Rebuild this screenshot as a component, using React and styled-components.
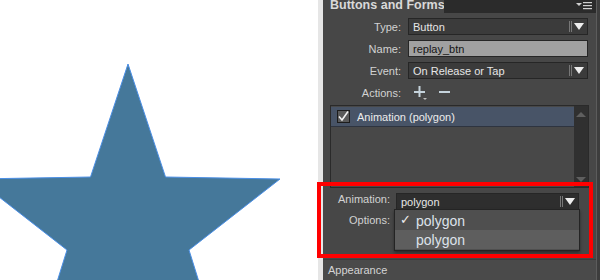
import React from 'react'
import styled, { createGlobalStyle } from 'styled-components'

const Global = createGlobalStyle`
    html, body {
        margin: 0;
        padding: 0;
        background: #fff;
        overflow: hidden;
    }
    body {
        font-family: "Liberation Sans", Arial, sans-serif;
    }
`

const Screen = styled.div`
    position: relative;
    display: flex;
    width: 600px;
    height: 280px;
    overflow: hidden;
`

const Canvas = styled.div`
    flex: 0 0 323px;
    height: 280px;
    background: #fff;
    border-right: 5px solid #e6e6e6;
    box-sizing: border-box;
`

const Panel = styled.div`
    flex: 0 0 273px;
    display: flex;
    flex-direction: column;
    background: #474747;
    border-right: 1px solid #5c5c5c;
`

const Gutter = styled.div`
    flex: 1 1 auto;
    background: #3d3d3d;
`

const Header = styled.div`
    flex: 0 0 13px;
    display: flex;
    background: #2b2b2b;
`

const Tab = styled.div`
    width: 117px;
    background: #474747;
    color: #d9d9d9;
    font-size: 12.5px;
    font-weight: 700;
    line-height: 13px;
    padding-left: 4px;
    margin-top: -3px;
    display: flex;
    align-items: center;
    gap: 3px;
    white-space: nowrap;
    overflow: hidden;
`

const HeaderFill = styled.div`
    flex: 1;
    display: flex;
    justify-content: flex-end;
    padding-right: 2px;
`

const Form = styled.div`
    display: grid;
    grid-template-columns: 78px 1fr;
    column-gap: 7px;
    row-gap: 5px;
    padding: 5px 8px 0 0;
    align-items: center;
`

const Label = styled.div`
    text-align: right;
    color: #d2d2d2;
    font-size: 11px;
`

const Select = styled.div`
    height: 17px;
    box-sizing: border-box;
    border: 1px solid #262626;
    background: ${p => (p.$dark ? '#2e2e2e' : '#3b3b3b')};
    color: #e6e6e6;
    font-size: 11px;
    display: flex;
    align-items: center;
    padding-left: 4px;
    gap: 4px;
`

const SelectText = styled.span`
    flex: 1;
    white-space: nowrap;
`

const Arrow = styled.span`
    display: flex;
    align-items: center;
    gap: 2px;
    padding-right: 3px;
    &::before {
        content: '';
        width: 3px;
        height: 11px;
        border-left: 1px solid #777;
        border-right: 1px solid #777;
        box-sizing: border-box;
    }
    &::after {
        content: '';
        border-left: 5px solid transparent;
        border-right: 5px solid transparent;
        border-top: 7px solid #eee;
    }
`

const Input = styled.div`
    height: 17px;
    box-sizing: border-box;
    border: 1px solid #262626;
    background: #a1a1a1;
    color: #151515;
    font-size: 11px;
    display: flex;
    align-items: center;
    padding-left: 4px;
`

const Actions = styled.div`
    height: 17px;
    display: flex;
    align-items: center;
    gap: 11px;
    padding-left: 6px;
`

const ListBox = styled.div`
    margin: 4px 7px 0 7px;
    height: 81px;
    border: 1px solid #2a2a2a;
    background: #484848;
    display: flex;
`

const ListRows = styled.div`
    flex: 1;
`

const ListRow = styled.div`
    height: 19px;
    margin-top: 1px;
    background: #485467;
    border-bottom: 1px solid #2e3440;
    display: flex;
    align-items: center;
    gap: 7px;
    padding-left: 6px;
    color: #ececec;
    font-size: 11px;
`

const Check = styled.div`
    width: 13px;
    height: 13px;
    box-sizing: border-box;
    border: 1px solid #1c1c1c;
    background: #5a5a5a;
    display: flex;
    align-items: center;
    justify-content: center;
`

const Scrollbar = styled.div`
    flex: 0 0 14px;
    background: #303030;
    display: flex;
    flex-direction: column;
    justify-content: space-between;
    align-items: center;
    padding: 6px 0 5px;
`

const ScrollArrow = styled.div`
    width: 0;
    height: 0;
    border-left: 5px solid transparent;
    border-right: 5px solid transparent;
    ${p => (p.$down ? 'border-top: 5px solid #5f5f5f;' : 'border-bottom: 5px solid #5f5f5f;')}
`

const Section = styled.div`
    position: relative;
    height: 66px;
    display: grid;
    grid-template-columns: 67px 183px;
    column-gap: 6px;
    row-gap: 4px;
    align-content: start;
    padding-top: 5px;
    box-sizing: border-box;
    height: 71px;
`

const Menu = styled.div`
    position: absolute;
    left: 71px;
    top: 21px;
    width: 186px;
    box-sizing: border-box;
    border: 1px solid #242424;
    background: #4f4f4f;
    box-shadow: 0 2px 3px rgba(0, 0, 0, 0.4);
    padding: 1px 0;
`

const MenuItem = styled.div`
    height: 19px;
    display: flex;
    align-items: center;
    background: ${p => (p.$hover ? '#5e5e5e' : 'transparent')};
    color: #dde2ea;
    font-size: 14px;
    padding-left: 21px;
    position: relative;
`

const Tick = styled.span`
    position: absolute;
    left: 5px;
    top: 1px;
    font-size: 13px;
    color: #eee;
`

const OptionsField = styled.div`
    height: 15px;
    margin-top: 16px;
    border-bottom: 1px dashed #6a6a6a;
    width: 100px;
`

const Appearance = styled.div`
    flex: 1;
    border-top: 1px solid #3c3c3c;
    background: #4a4a4a;
    color: #d4d4d4;
    font-size: 11px;
    padding: 4px 0 0 5px;
`

const Highlight = styled.div`
    position: absolute;
    left: 317px;
    top: 182px;
    width: 276px;
    height: 76px;
    box-sizing: border-box;
    border: 4px solid #ff0000;
    pointer-events: none;
`

const Star = () => (
    <svg width="318" height="280" viewBox="0 0 318 280">
        <polygon
            points="128,64 165.5,177 280,179 189,250 224,362 128,292 32,362 67,250 -24,179 90.5,177"
            fill="#45789a"
            stroke="#4b8fe6"
            strokeWidth="1"
        />
    </svg>
)

const PanelMenu = () => (
    <svg width="20" height="11" viewBox="0 0 20 11">
        <path d="M2 3 L8 3 L5 6 Z" fill="#cfcfcf" />
        <rect x="9" y="2" width="9" height="1.2" fill="#cfcfcf" />
        <rect x="9" y="5" width="9" height="1.2" fill="#cfcfcf" />
        <rect x="9" y="8" width="9" height="1.2" fill="#cfcfcf" />
    </svg>
)

const Collapse = () => (
    <svg width="7" height="9" viewBox="0 0 7 9">
        <path d="M0.5 3.5 L3.5 0.5 L6.5 3.5 M0.5 5.5 L3.5 8.5 L6.5 5.5" stroke="#d0d0d0" fill="none" />
    </svg>
)

const Plus = () => (
    <svg width="14" height="14" viewBox="0 0 14 14">
        <rect x="0" y="5" width="11" height="2" fill="#c5d3dc" />
        <rect x="4.5" y="0" width="2" height="11" fill="#c5d3dc" />
        <path d="M9 12 L13 12 L11 14 Z" fill="#bbb" />
    </svg>
)

const Minus = () => (
    <svg width="12" height="14" viewBox="0 0 12 14">
        <rect x="0" y="5" width="11" height="2" fill="#c5d3dc" />
    </svg>
)

const CheckMark = () => (
    <svg width="11" height="11" viewBox="0 0 11 11">
        <path d="M1 5.5 L4 9 L10 0.5" stroke="#f2f2f2" strokeWidth="1.6" fill="none" />
    </svg>
)

export default function App() {
    return (
        <>
            <Global />
            <Screen>
                <Canvas>
                    <Star />
                </Canvas>
                <Panel>
                    <Header>
                        <Tab>
                            <Collapse />
                            Buttons and Forms
                        </Tab>
                        <HeaderFill>
                            <PanelMenu />
                        </HeaderFill>
                    </Header>
                    <Form>
                        <Label>Type:</Label>
                        <Select>
                            <SelectText>Button</SelectText>
                            <Arrow />
                        </Select>
                        <Label>Name:</Label>
                        <Input>replay_btn</Input>
                        <Label>Event:</Label>
                        <Select>
                            <SelectText>On Release or Tap</SelectText>
                            <Arrow />
                        </Select>
                        <Label>Actions:</Label>
                        <Actions>
                            <Plus />
                            <Minus />
                        </Actions>
                    </Form>
                    <ListBox>
                        <ListRows>
                            <ListRow>
                                <Check>
                                    <CheckMark />
                                </Check>
                                Animation (polygon)
                            </ListRow>
                        </ListRows>
                        <Scrollbar>
                            <ScrollArrow />
                            <ScrollArrow $down />
                        </Scrollbar>
                    </ListBox>
                    <Section>
                        <Label>Animation:</Label>
                        <Select $dark>
                            <SelectText>polygon</SelectText>
                            <Arrow />
                        </Select>
                        <Label>Options:</Label>
                        <OptionsField />
                        <Menu>
                            <MenuItem>
                                <Tick>✓</Tick>
                                polygon
                            </MenuItem>
                            <MenuItem $hover>polygon</MenuItem>
                        </Menu>
                    </Section>
                    <Appearance>Appearance</Appearance>
                </Panel>
                <Gutter />
                <Highlight />
            </Screen>
        </>
    )
}
